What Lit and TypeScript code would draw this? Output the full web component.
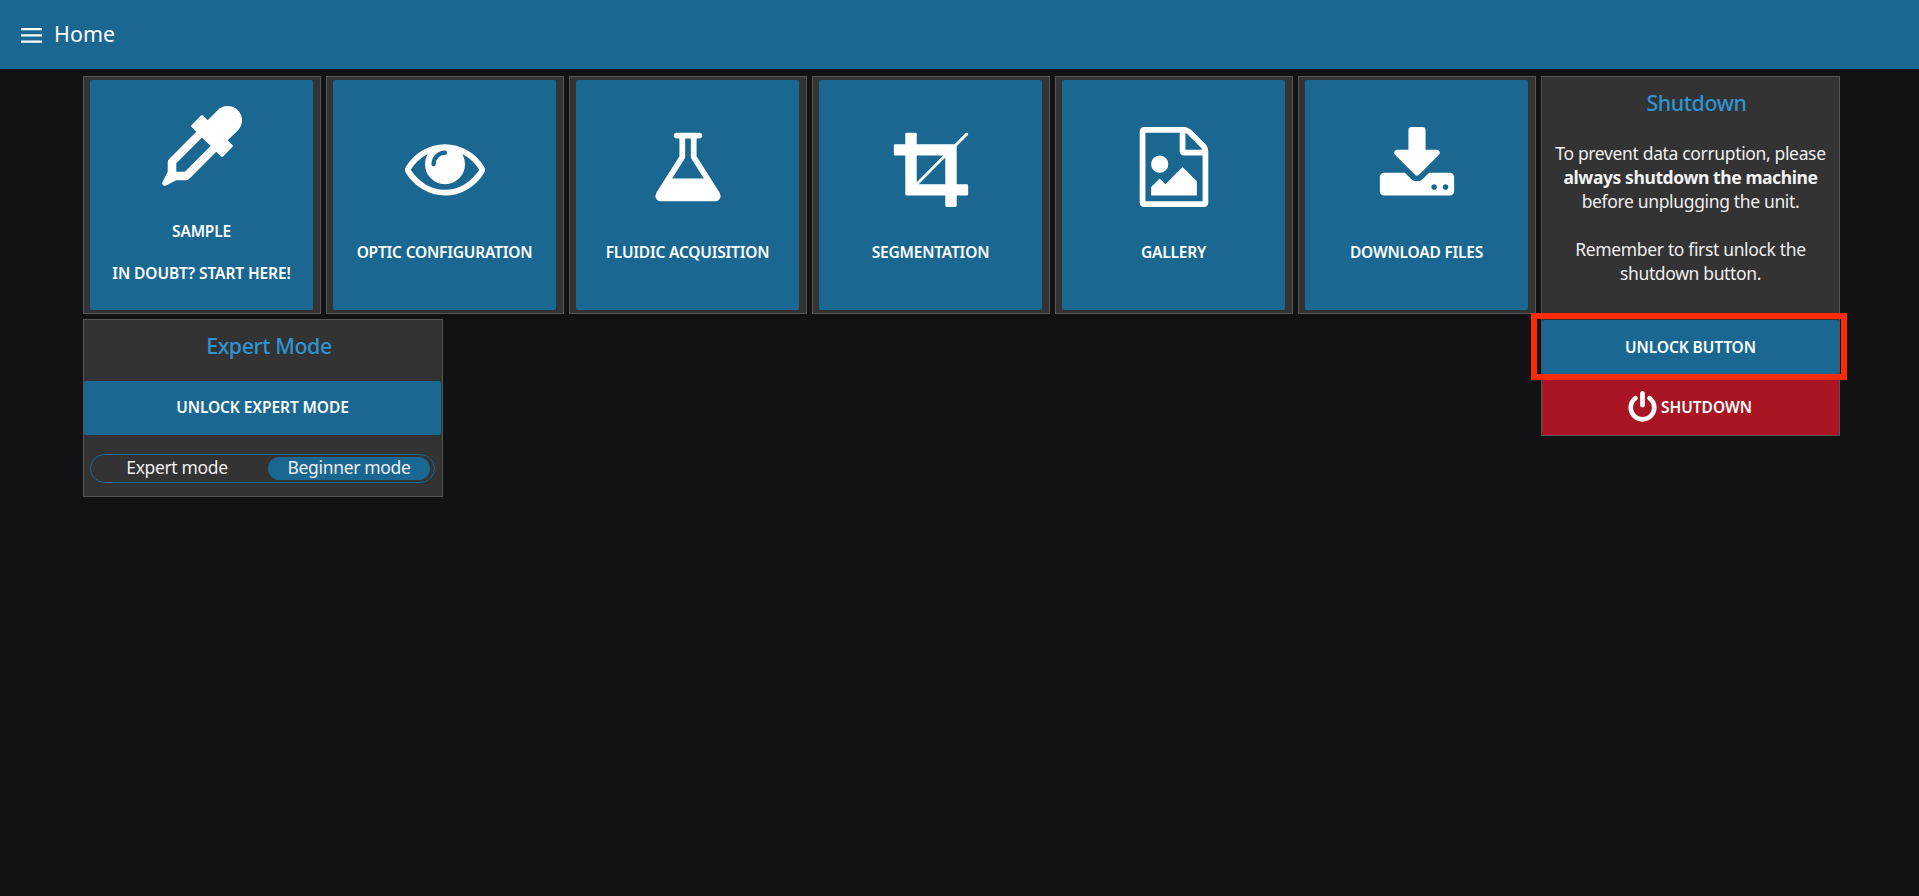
import { LitElement, html, css, svg } from "lit";
import { customElement, property } from "lit/decorators.js";

const ICONS: Record<string, string> = {
  dropper:
    "M1698 94q94 94 94 226.500t-94 225.500l-225 223 104 104q10 10 10 23t-10 23l-210 210q-10 10-23 10t-23-10l-105-105-603 603q-37 37-90 37h-203l-232 116q-42 16-66-10-28-27-14-64l120-234v-203q0-53 37-90l603-603-105-105q-10-10-10-23t10-23l210-210q10-10 23-10t23 10l104 104 223-225q93-94 225.500-94t226.500 94zm-1186 1378l576-576-192-192-576 576v192h192z",
  eye: "M1664 960q-152-236-381-353 61 104 61 225 0 185-131.500 316.500t-316.500 131.500-316.500-131.500-131.500-316.500q0-121 61-225-229 117-381 353 133 205 333.500 326.500t434.500 121.500 434.500-121.500 333.500-326.500zm-720-384q0-20-14-34t-34-14q-125 0-214.500 89.500t-89.500 214.500q0 20 14 34t34 14 34-14 14-34q0-86 61-147t147-61q20 0 34-14t14-34zm848 384q0 34-20 69-140 230-376.500 368.500t-499.500 138.500-499.500-139-376.500-368q-20-35-20-69t20-69q140-229 376.500-368t499.500-139 499.500 139 376.500 368q20 35 20 69z",
  flask:
    "M1591 1448q56 89 21.500 152.500t-140.500 63.500h-1152q-106 0-140.500-63.500t21.500-152.500l503-793v-399h-64q-26 0-45-19t-19-45 19-45 45-19h512q26 0 45 19t19 45-19 45-45 19h-64v399zm-779-725l-272 429h712l-272-429-20-31v-436h-128v436z",
  crop: "M621 1280h595v-595zm-45-45l595-595h-595v595zm1152 77v192q0 14-9 23t-23 9h-224v224q0 14-9 23t-23 9h-192q-14 0-23-9t-9-23v-224h-864q-14 0-23-9t-9-23v-864h-224q-14 0-23-9t-9-23v-192q0-14 9-23t23-9h224v-224q0-14 9-23t23-9h192q14 0 23 9t9 23v224h851l246-247q10-9 23-9t23 9q9 10 9 23t-9 23l-247 246v851h224q14 0 23 9t9 23z",
  picture:
    "M1596 380q28 28 48 76t20 88v1152q0 40-28 68t-68 28h-1344q-40 0-68-28t-28-68v-1600q0-40 28-68t68-28h896q40 0 88 20t76 48zm-444-244v376h376q-10-29-22-41l-313-313q-12-12-41-22zm384 1528v-1024h-416q-40 0-68-28t-28-68v-416h-768v1536h1280zm-128-448v320h-1024v-192l192-192 128 128 384-384zm-832-192q-80 0-136-56t-56-136 56-136 136-56 136 56 56 136-56 136-136 56z",
  download:
    "M1344 1344q0-26-19-45t-45-19-45 19-19 45 19 45 45 19 45-19 19-45zm256 0q0-26-19-45t-45-19-45 19-19 45 19 45 45 19 45-19 19-45zm128-224v320q0 40-28 68t-68 28h-1472q-40 0-68-28t-28-68v-320q0-40 28-68t68-28h465l135 136q58 56 136 56t136-56l136-136h464q40 0 68 28t28 68zm-325-569q17 41-14 70l-448 448q-18 19-45 19t-45-19l-448-448q-31-29-14-70 17-39 59-39h256v-448q0-26 19-45t45-19h256q26 0 45 19t19 45v448h256q42 0 59 39z",
  power:
    "M1664 896q0 156-61 298t-164 245-245 164-298 61-298-61-245-164-164-245-61-298q0-182 80.500-343t226.500-270q43-32 95.500-25t83.500 50q32 42 24.500 94.500t-49.500 84.500q-98 74-151.500 181t-53.500 228q0 104 40.500 198.500t109.500 163.500 163.500 109.500 198.500 40.500 198.500-40.500 163.500-109.500 109.500-163.500 40.500-198.500q0-121-53.500-228t-151.500-181q-42-32-49.500-84.500t24.500-94.500q31-43 84-50t95 25q146 109 226.500 270t80.500 343zm-640-768v640q0 52-38 90t-90 38-90-38-38-90v-640q0-52 38-90t90-38 90 38 38 90z",
};

const icon = (name: string) =>
  html`<svg class="icon" viewBox="0 0 1792 1792" aria-hidden="true">${svg`<path fill="currentColor" d=${ICONS[name]}></path>`}</svg>`;

@customElement("nav-tile")
class NavTile extends LitElement {
  @property() icon = "";
  @property({ type: Array }) lines: string[] = [];

  static styles = css`
    :host {
      display: block;
      box-sizing: border-box;
      width: 238px;
      height: 238px;
      padding: 3px 7px 3px 6px;
      border: 1px solid #555;
      background: #333;
    }
    .button {
      box-sizing: border-box;
      width: 100%;
      height: 100%;
      display: flex;
      flex-direction: column;
      align-items: center;
      justify-content: center;
      padding: 0;
      border: 0;
      border-radius: 2px;
      background: #1a6891;
      color: #fff;
      font: 600 15.5px/21px "Noto Sans", sans-serif;
      letter-spacing: -0.2px;
    }
    .icon {
      display: block;
      width: 80px;
      height: 80px;
      margin-bottom: 35px;
    }
    .line + .line {
      margin-top: 21px;
      letter-spacing: -0.1px;
    }
  `;

  render() {
    return html`<button class="button">
      ${icon(this.icon)}${this.lines.map((l) => html`<span class="line">${l}</span>`)}
    </button>`;
  }
}

const TILES = [
  { icon: "dropper", lines: ["SAMPLE", "IN DOUBT? START HERE!"] },
  { icon: "eye", lines: ["OPTIC CONFIGURATION"] },
  { icon: "flask", lines: ["FLUIDIC ACQUISITION"] },
  { icon: "crop", lines: ["SEGMENTATION"] },
  { icon: "picture", lines: ["GALLERY"] },
  { icon: "download", lines: ["DOWNLOAD FILES"] },
];

@customElement("app-root")
class AppRoot extends LitElement {
  static styles = css`
    :host {
      display: block;
      min-height: 896px;
      background: #121113;
      color: #eee;
      font: 17.5px/24px "Noto Sans", sans-serif;
      letter-spacing: -0.35px;
    }
    .header {
      display: flex;
      align-items: center;
      box-sizing: border-box;
      height: 69px;
      padding-left: 21px;
      background: #1a6891;
      color: #fff;
    }
    .menu {
      width: 21px;
      height: 15px;
      margin: 2px 12px 0 0;
    }
    .heading {
      margin: -2px 0 0;
      font-size: 21.4px;
      font-weight: 400;
      letter-spacing: 0.1px;
    }
    .board {
      display: flex;
      gap: 5px;
      padding: 7px 0 0 83px;
    }
    .main {
      display: flex;
      flex-direction: column;
      gap: 5px;
    }
    .tiles {
      display: flex;
      gap: 5px;
    }
    .card {
      box-sizing: border-box;
      display: flex;
      flex-direction: column;
      border: 1px solid #555;
      background: #333;
      text-align: center;
    }
    .title {
      margin: 12px 0 0 12px;
      color: #2f93d1;
      font-size: 21.4px;
      font-weight: 500;
      line-height: 28px;
      letter-spacing: -0.4px;
    }
    .action {
      display: flex;
      align-items: center;
      justify-content: center;
      height: 54px;
      padding: 0;
      border: 0;
      border-radius: 2px;
      background: #1a6891;
      color: #fff;
      font: 600 15.5px/21px "Noto Sans", sans-serif;
      letter-spacing: -0.1px;
    }
    .shutdown {
      width: 299px;
      height: 360px;
    }
    .text {
      margin: 24px 0 0;
    }
    .bold {
      color: #f3f3f3;
      letter-spacing: -0.41px;
    }
    .highlight {
      position: relative;
      display: flex;
      flex-direction: column;
      margin-top: 35px;
    }
    .highlight::after {
      content: "";
      position: absolute;
      inset: -7px -8px -6px -11px;
      border: 6px solid #f92b08;
    }
    .danger {
      height: auto;
      flex: 1;
      gap: 2px;
      margin-top: 5px;
      padding-right: 3px;
      background: #a91522;
      letter-spacing: 0;
    }
    .danger .icon {
      width: 33px;
      height: 33px;
    }
    .expert {
      width: 360px;
      height: 178px;
    }
    .expert .action {
      margin: 21px 1px 0 0;
      padding-bottom: 1px;
    }
    .switch {
      display: grid;
      grid-template-columns: 172px 162px;
      align-items: center;
      gap: 5px;
      box-sizing: border-box;
      height: 29px;
      margin: 19px 7px 0 6px;
      border: 1px solid #1a6891;
      border-radius: 15px;
    }
    .option {
      height: 23px;
      line-height: 21px;
      border-radius: 12px;
    }
    .option.on {
      background: #1a6891;
    }
  `;

  render() {
    return html`
      <header class="header">
        <svg class="menu" viewBox="0 0 21 15" aria-hidden="true">
          <path stroke="#fff" stroke-width="2.300" d="M0 1.200h21M0 7.400h21M0 13.600h21"></path>
        </svg>
        <h1 class="heading">Home</h1>
      </header>
      <main class="board">
        <div class="main">
          <div class="tiles">
            ${TILES.map((t) => html`<nav-tile .icon=${t.icon} .lines=${t.lines}></nav-tile>`)}
          </div>
          <section class="card expert">
            <h2 class="title">Expert Mode</h2>
            <button class="action">UNLOCK EXPERT MODE</button>
            <div class="switch">
              <span class="option">Expert mode</span>
              <span class="option on">Beginner mode</span>
            </div>
          </section>
        </div>
        <section class="card shutdown">
          <h2 class="title">Shutdown</h2>
          <p class="text">
            To prevent data corruption, please<br /><b class="bold">always shutdown the machine</b
            ><br />before unplugging the unit.
          </p>
          <p class="text">Remember to first unlock the<br />shutdown button.</p>
          <div class="highlight"><button class="action">UNLOCK BUTTON</button></div>
          <button class="action danger">${icon("power")}<span>SHUTDOWN</span></button>
        </section>
      </main>
    `;
  }
}
